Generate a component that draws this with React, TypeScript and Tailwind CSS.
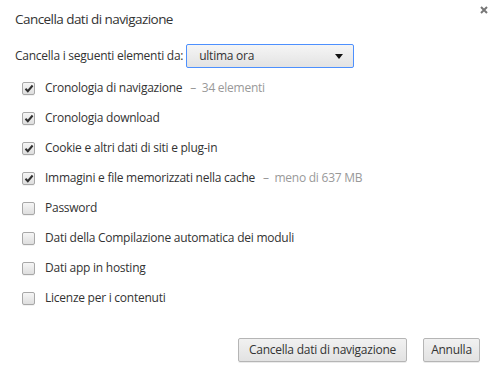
import React from "react";

const items: { label: string; extra?: string; checked: boolean }[] = [
  { label: "Cronologia di navigazione", extra: "34 elementi", checked: true },
  { label: "Cronologia download", checked: true },
  { label: "Cookie e altri dati di siti e plug-in", checked: true },
  { label: "Immagini e file memorizzati nella cache", extra: "meno di 637 MB", checked: true },
  { label: "Password", checked: false },
  { label: "Dati della Compilazione automatica dei moduli", checked: false },
  { label: "Dati app in hosting", checked: false },
  { label: "Licenze per i contenuti", checked: false },
];

function Check({ checked }: { checked: boolean }) {
  return (
    <div className="w-[13px] h-[13px] rounded-[2px] border border-[#a8a8a8] bg-gradient-to-b from-[#f6f6f6] to-[#dedede] flex items-center justify-center shadow-[0_1px_0_rgba(0,0,0,0.05)]">
      {checked && (
        <svg width="10" height="9" viewBox="0 0 10 9">
          <path d="M1.5 4.8 L3.8 7.2 L8.6 1.5" fill="none" stroke="#303030" strokeWidth="2" />
        </svg>
      )}
    </div>
  );
}

export default function App() {
  return (
    <div
      className="w-[494px] h-[373px] bg-white relative text-[#333] overflow-hidden"
      style={{ fontFamily: '"Open Sans", "Noto Sans", sans-serif' }}
    >
      <button className="absolute right-[6px] top-[5px] w-[9px] h-[9px] flex items-center justify-center">
        <svg width="8" height="8" viewBox="0 0 8 8">
          <path d="M1 1 L7 7 M7 1 L1 7" stroke="#777" strokeWidth="2" />
        </svg>
      </button>
      <div className="pl-[15px] pt-[9px] pr-[14px] flex flex-col">
        <div className="text-[13.5px] leading-[20px] tracking-[-0.55px] text-[#333]">Cancella dati di navigazione</div>
        <div className="mt-[15px] flex items-center h-[24px] text-[12px] tracking-[-0.25px]">
          <span>Cancella i seguenti elementi da:</span>
          <div className="ml-[3px] w-[168px] h-[24px] border border-[#4d90fe] rounded-[2px] bg-gradient-to-b from-[#f5f5f5] to-[#e3e3e3] flex items-center justify-between pl-[12px] pr-[10px]">
            <span>ultima ora</span>
            <svg width="8" height="5" viewBox="0 0 8 5">
              <path d="M0 0 H8 L4 5 Z" fill="#111" />
            </svg>
          </div>
        </div>
        <div className="mt-[5px] flex flex-col">
          {items.map((it) => (
            <div key={it.label} className="h-[30px] flex items-center pl-[7px] text-[12px] tracking-[-0.25px]">
              <Check checked={it.checked} />
              <span className="ml-[10px] text-[#333]">{it.label}</span>
              {it.extra && (
                <span className="ml-[8px] text-[#999]">–&nbsp; {it.extra}</span>
              )}
            </div>
          ))}
        </div>
        <div className="mt-[25px] flex justify-end gap-[16px] text-[12px] tracking-[-0.25px]">
          <button className="h-[24px] w-[169px] border border-[#b5b5b5] rounded-[2px] bg-gradient-to-b from-[#f1f1f1] to-[#e2e2e2] shadow-[0_1px_0_rgba(0,0,0,0.08)] text-[#333]">
            Cancella dati di navigazione
          </button>
          <button className="h-[24px] w-[57px] border border-[#b5b5b5] rounded-[2px] bg-gradient-to-b from-[#f1f1f1] to-[#e2e2e2] shadow-[0_1px_0_rgba(0,0,0,0.08)] text-[#333]">
            Annulla
          </button>
        </div>
      </div>
    </div>
  );
}
